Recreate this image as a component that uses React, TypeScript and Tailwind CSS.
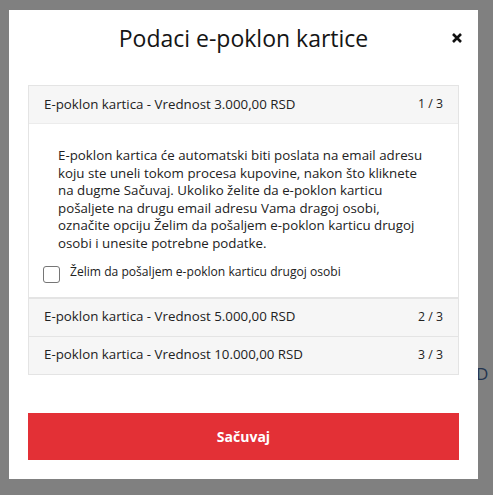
import React from "react";

const font = { fontFamily: '"Open Sans", "Noto Sans", sans-serif' };

function Header({ title, count }: { title: string; count: string }) {
  return (
    <div className="flex h-[37px] items-center justify-between bg-[#f6f6f6] pl-[15px] pr-[15px] text-[13.3px] text-[#222]">
      <span>{title}</span>
      <span className="text-[12.3px]">{count}</span>
    </div>
  );
}

export default function App() {
  return (
    <div className="relative h-[495px] w-[493px] overflow-hidden bg-[#808080]" style={font}>
      <span className="absolute left-[476px] top-[361px] text-[17px] text-[#23344f]">D</span>
      <div className="relative ml-[9px] pt-[10px]">
        <div className="flex h-[469px] w-[469px] flex-col bg-white px-[19px] pb-[19px]">
          <div className="relative flex h-[56px] items-center justify-center">
            <h1 className="text-[23px] leading-none text-[#151515]">Podaci e-poklon kartice</h1>
            <svg className="absolute right-[-3px] top-[23px]" width="10" height="10" viewBox="0 0 10 10">
              <path d="M1 1 L9 9 M9 1 L1 9" stroke="#111" strokeWidth="2.6" strokeLinecap="butt" />
            </svg>
          </div>
          <div className="mt-[19px] border border-[#e4e4e4]">
            <Header title="E-poklon kartica - Vrednost 3.000,00 RSD" count="1 / 3" />
            <div className="border-t border-[#ececec] bg-white px-[14px] pb-[14px] pt-[23px]">
              <p className="w-[386px] pl-[15px] text-[13.3px] leading-[17.6px] text-[#222]">
                E-poklon kartica će automatski biti poslata na email adresu koju ste uneli tokom procesa kupovine, nakon što kliknete na dugme Sačuvaj. Ukoliko želite da e-poklon karticu pošaljete na drugu email adresu Vama dragoj osobi, označite opciju Želim da pošaljem e-poklon karticu drugoj osobi i unesite potrebne podatke.
              </p>
              <label className="mt-[13px] flex items-center gap-[10px] text-[12.1px] text-[#222]">
                <span className="block h-[17px] w-[17px] rounded-[3px] border border-[#767676] bg-white" />
                <span className="-mt-[3px]">Želim da pošaljem e-poklon karticu drugoj osobi</span>
              </label>
            </div>
            <div className="border-t-2 border-[#e4e4e4]">
              <Header title="E-poklon kartica - Vrednost 5.000,00 RSD" count="2 / 3" />
            </div>
            <div className="border-t border-[#e4e4e4]">
              <Header title="E-poklon kartica - Vrednost 10.000,00 RSD" count="3 / 3" />
            </div>
          </div>
          <button className="mt-[38px] flex h-[47px] w-full items-center justify-center bg-[#e33036] text-[14px] font-bold text-white">
            Sačuvaj
          </button>
        </div>
      </div>
    </div>
  );
}
